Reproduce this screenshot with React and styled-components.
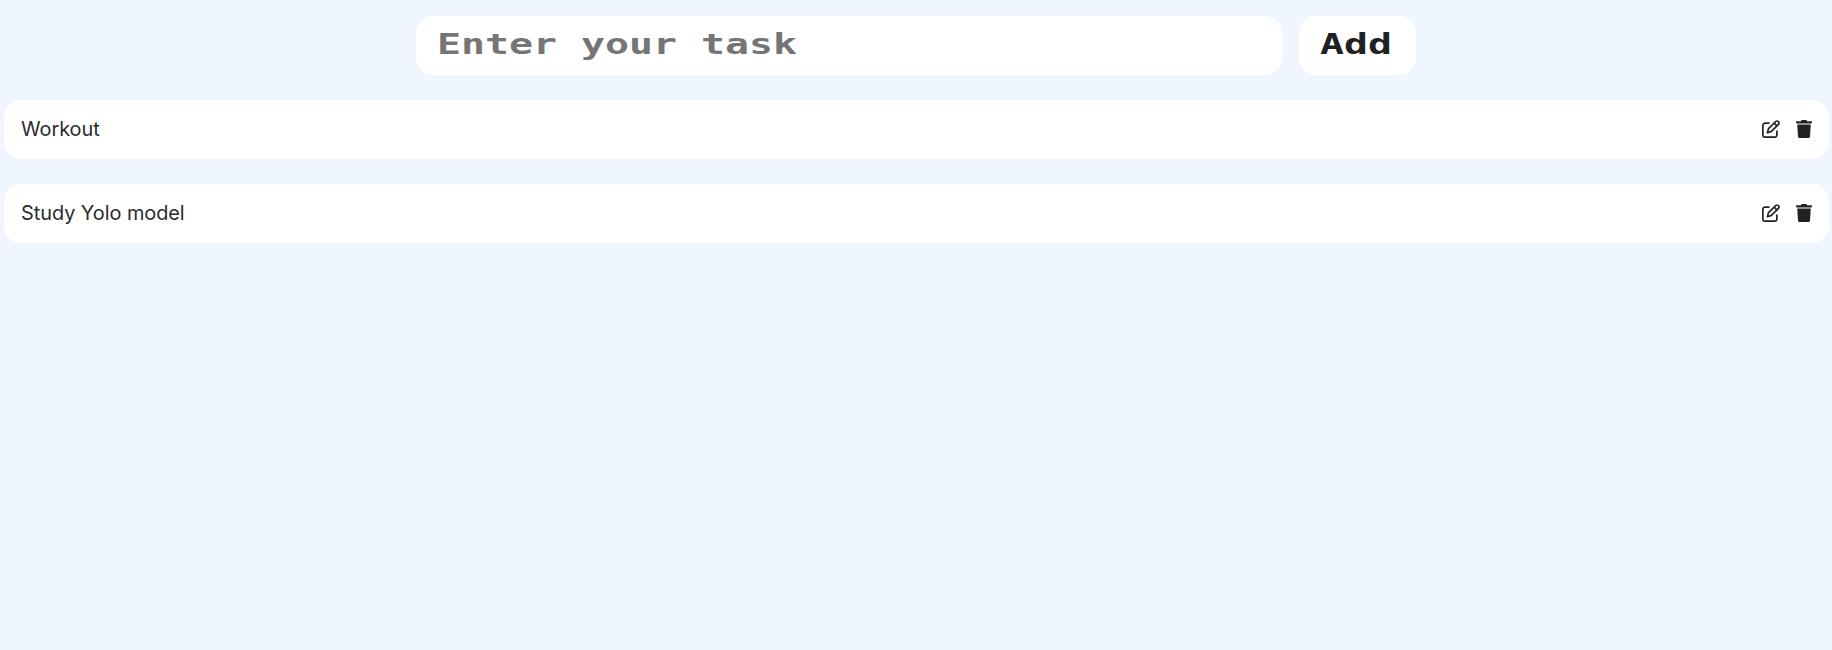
import React, { useState } from "react";
import styled, { createGlobalStyle } from "styled-components";
import { FaTrash } from "react-icons/fa";
import { FaRegPenToSquare } from "react-icons/fa6";

const GlobalStyle = createGlobalStyle`
  *, *::before, *::after { box-sizing: border-box; }
  body {
    margin: 0;
    background: #eff6ff;
    color: #202124;
    font-family: Inter, "Liberation Sans", sans-serif;
  }
`;

const Page = styled.main`
  min-height: 100vh;
  padding: 16px 3px 0 4px;
`;

const TaskForm = styled.form`
  display: flex;
  justify-content: center;
  gap: 17px;
  margin-right: 1px;
`;

const Field = styled.div`
  width: 866px;
  height: 59px;
  padding-left: 21px;
  overflow: hidden;
  border-radius: 17px;
  background: #fff;
`;

const TaskInput = styled.input`
  display: block;
  width: 600px;
  height: 55px;
  padding: 0;
  border: 0;
  outline: 0;
  background: transparent;
  color: #202124;
  font: bold 28.6px "DejaVu Sans Mono", monospace;
  transform: scaleX(1.394);
  transform-origin: left;

  &::placeholder {
    color: #757575;
    opacity: 1;
  }
`;

const AddButton = styled.button`
  width: 117px;
  height: 59px;
  padding: 0 0 4px 21px;
  border: 0;
  border-radius: 17px;
  background: #fff;
  color: #202124;
  font: bold 28.6px "DejaVu Sans Mono", monospace;
  text-align: left;
`;

const WideLabel = styled.span`
  display: inline-block;
  transform: scaleX(1.394);
  transform-origin: left;
`;

const TaskList = styled.ul`
  display: flex;
  flex-direction: column;
  gap: 25px;
  margin: 25px 0 0;
  padding: 0;
  list-style: none;
`;

const TaskRow = styled.li`
  display: flex;
  align-items: center;
  justify-content: space-between;
  height: 59px;
  padding: 0 16px 2px 17px;
  border-radius: 17px;
  background: #fff;
  font-size: 19.9px;
  letter-spacing: -0.04px;
  color: #2a2b2e;
`;

const Actions = styled.div`
  display: flex;
  gap: 15px;
`;

const IconButton = styled.button`
  display: flex;
  padding: 0;
  border: 0;
  background: none;
  color: #202124;
  font-size: 18px;
`;

const tasks = ["Workout", "Study Yolo model"];

export default function App() {
  const [draft, setDraft] = useState("");
  return (
    <>
      <GlobalStyle />
      <Page>
        <TaskForm onSubmit={(e) => e.preventDefault()}>
          <Field>
            <TaskInput
              placeholder="Enter your task"
              value={draft}
              onChange={(e) => setDraft(e.target.value)}
            />
          </Field>
          <AddButton type="submit">
            <WideLabel>Add</WideLabel>
          </AddButton>
        </TaskForm>
        <TaskList>
          {tasks.map((task) => (
            <TaskRow key={task}>
              <span>{task}</span>
              <Actions>
                <IconButton aria-label="Edit"><FaRegPenToSquare /></IconButton>
                <IconButton aria-label="Delete"><FaTrash /></IconButton>
              </Actions>
            </TaskRow>
          ))}
        </TaskList>
      </Page>
    </>
  );
}
